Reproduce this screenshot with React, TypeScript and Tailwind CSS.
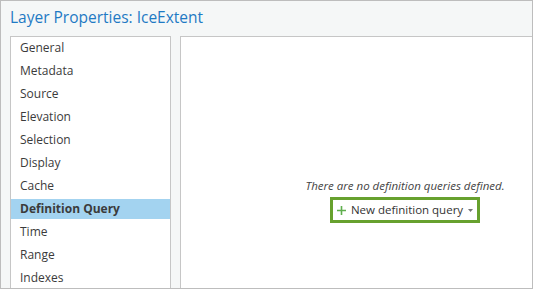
import React from 'react';

// Pages shown in the left navigation list
const pages = [
  'General',
  'Metadata',
  'Source',
  'Elevation',
  'Selection',
  'Display',
  'Cache',
  'Definition Query',
  'Time',
  'Range',
  'Indexes',
];

const App: React.FC = () => {
  const selected = 'Definition Query';

  return (
    <div
      className="w-[533px] h-[289px] overflow-hidden border border-[#bdbdbd] bg-[#f5f7f7] flex flex-col"
      style={{ fontFamily: '"Open Sans", "Noto Sans", sans-serif' }}
    >
      {/* Title */}
      <div className="h-[35px] shrink-0 pl-[9px] pt-[5px] text-[15.5px] leading-[22px] text-[#1f7ac4]">
        Layer Properties: IceExtent
      </div>

      <div className="flex flex-1 gap-[9px] pl-[9px]">
        {/* Page list */}
        <div className="w-[161px] shrink-0 h-[300px] border border-[#c6c6c6] bg-white pt-[1px] flex flex-col gap-[3px]">
          {pages.map((p) => (
            <div
              key={p}
              className={`h-[20px] pl-[9px] flex items-center text-[12px] text-[#3b3b3b] ${
                p === selected ? 'bg-[#a3d3f0] font-bold' : ''
              }`}
            >
              {p}
            </div>
          ))}
        </div>

        {/* Content */}
        <div className="w-[450px] shrink-0 h-[300px] border border-[#c6c6c6] bg-white flex flex-col items-center pt-[141px]">
          <div className="text-[11.5px] italic text-[#444] leading-[16px] whitespace-nowrap">
            There are no definition queries defined.
          </div>
          <button className="mt-[3px] h-[26px] border-[3px] border-[#67a12e] flex items-center pl-[4px] pr-[4px] text-[11.5px] text-[#333] whitespace-nowrap">
            <svg width="9" height="9" viewBox="0 0 9 9" className="mr-[5px]">
              <path d="M4.5 0V9M0 4.5H9" stroke="#5fae4e" strokeWidth="1.6" />
            </svg>
            <span>New definition query</span>
            <svg width="5" height="3" viewBox="0 0 5 3" className="ml-[5px] mt-[1px]">
              <path d="M0 0H5L2.5 3Z" fill="#777" />
            </svg>
          </button>
        </div>
      </div>
    </div>
  );
};

export default App;
